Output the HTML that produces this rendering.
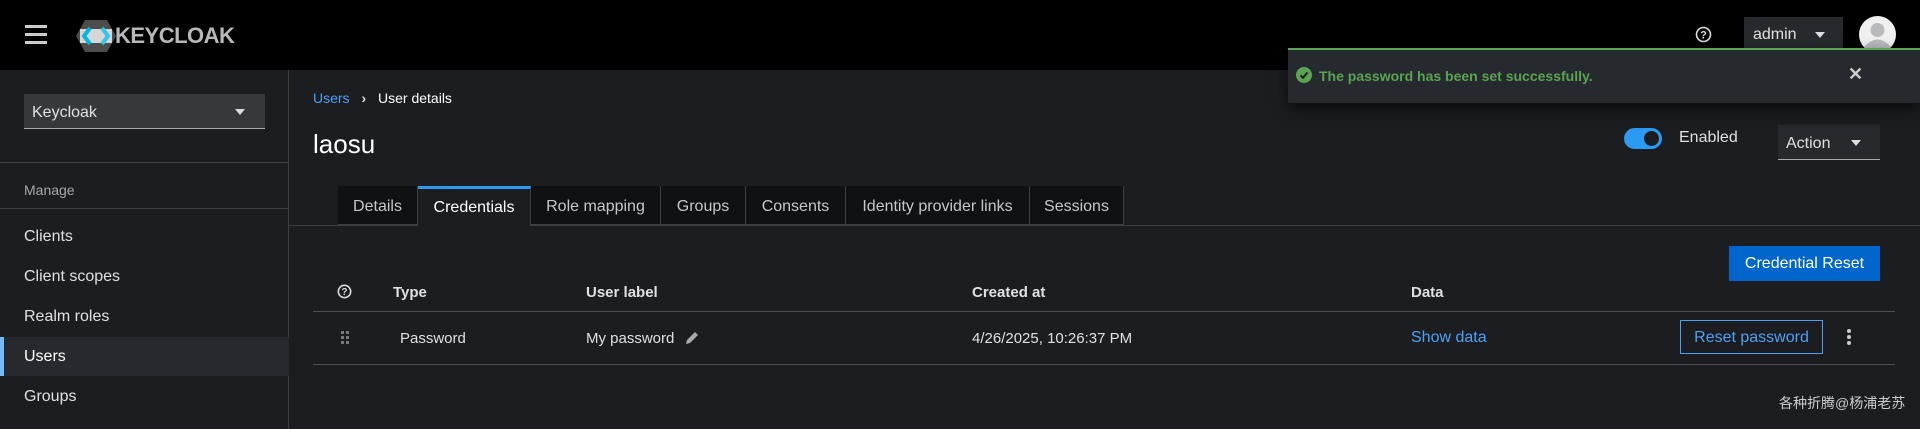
<!DOCTYPE html>
<html><head><meta charset="utf-8"><style>
*{box-sizing:border-box;margin:0;padding:0}
body{width:1920px;height:429px;overflow:hidden;background:#1b1d21;font-family:"Liberation Sans","Noto Sans CJK SC",sans-serif;color:#e0e0e0;font-size:16px;position:relative}
.a{position:absolute;white-space:nowrap}
.hdr{left:0;top:0;width:1920px;height:70px;background:#000}
.side{left:0;top:70px;width:289px;height:359px;background:#1b1d21;border-right:1px solid #3c3f42}
.line{position:absolute;height:1px;background:#3c3f42}
.tab{position:absolute;top:186px;height:39px;background:#0f1113;color:#c7c7c7;font-size:16px;line-height:41px;text-align:center;border-right:1px solid #3c3f42;border-bottom:1px solid #3c3f42}
.th{font-weight:bold;font-size:15px;color:#e0e0e0}
.blue{color:#4da1f5}
</style></head><body>
<div class="a hdr"></div>
<div class="a" style="left:25px;top:25px;width:22px;height:3px;background:#ccc;box-shadow:0 8px 0 #ccc,0 16px 0 #ccc"></div>
<svg class="a" style="left:76px;top:20px" width="40" height="32" viewBox="0 0 40 32"><polygon points="9,0 31,0 40,16 31,32 9,32 0,16" fill="#4d4d4d"/><polygon points="4,9 36,9 36,23 4,23" fill="#e6e6e6" opacity=".9"/><path d="M14 8 L8 16 L14 24" stroke="#00b8e3" stroke-width="4" fill="none"/><path d="M26 8 L32 16 L26 24" stroke="#33c6e9" stroke-width="4" fill="none"/></svg>
<div class="a" style="left:115px;top:23px;font-size:22px;font-weight:bold;color:#b8b8b8;letter-spacing:-0.5px">KEYCLOAK</div>
<svg class="a" style="left:1695px;top:26px" width="17" height="17" viewBox="0 0 17 17"><circle cx="8.5" cy="8.5" r="7" stroke="#ddd" stroke-width="1.6" fill="none"/><text x="8.5" y="12.5" font-size="11" font-weight="bold" text-anchor="middle" fill="#ddd" font-family="Liberation Sans">?</text></svg>
<div class="a" style="left:1744px;top:17px;width:99px;height:34px;background:#26292d;border-bottom:1px solid #aaa;color:#e0e0e0;line-height:36px;padding-left:9px">admin</div>
<div class="a" style="left:1815px;top:32px;border:5px solid transparent;border-top:6px solid #ddd"></div>
<svg class="a" style="left:1859px;top:16px" width="37" height="37" viewBox="0 0 37 37"><circle cx="18.5" cy="18.5" r="18.5" fill="#f0f0f0"/><circle cx="18.5" cy="14" r="7" fill="#b8bbbe"/><path d="M5 31 Q18.5 16 32 31 Q18.5 42 5 31Z" fill="#b8bbbe"/></svg>

<div class="a side"></div>
<div class="a" style="left:24px;top:94px;width:241px;height:35px;background:#36383c;border-bottom:1px solid #aaa;line-height:37px;padding-left:8px;color:#e0e0e0">Keycloak</div>
<div class="a" style="left:235px;top:109px;border:5px solid transparent;border-top:6px solid #ddd"></div>
<div class="line" style="left:0;top:162px;width:289px"></div>
<div class="line" style="left:0;top:208px;width:289px"></div>
<div class="a" style="left:24px;top:182px;font-size:14px;color:#a8a8a8">Manage</div>
<div class="a" style="left:24px;top:228px">Clients</div>
<div class="a" style="left:24px;top:268px">Client scopes</div>
<div class="a" style="left:24px;top:308px">Realm roles</div>
<div class="a" style="left:0;top:337px;width:289px;height:39px;background:#26292d;border-left:4px solid #73bcf7"></div>
<div class="a" style="left:24px;top:348px;color:#fff">Users</div>
<div class="a" style="left:24px;top:388px">Groups</div>

<div class="a" style="left:313px;top:90px;font-size:14px"><span class="blue">Users</span> <span style="margin:0 8px;font-weight:bold">›</span> <span style="color:#fff">User details</span></div>
<div class="a" style="left:313px;top:129px;font-size:26px;color:#fff">laosu</div>
<div class="a" style="left:1624px;top:128px;width:38px;height:21px;border-radius:11px;background:#2b9af3"></div>
<div class="a" style="left:1644px;top:131px;width:15px;height:15px;border-radius:50%;background:#1b1d21"></div>
<div class="a" style="left:1679px;top:129px">Enabled</div>
<div class="a" style="left:1778px;top:125px;width:102px;height:35px;background:#26292d;border-bottom:1px solid #aaa;line-height:37px;padding-left:8px">Action</div>
<div class="a" style="left:1851px;top:140px;border:5px solid transparent;border-top:6px solid #ddd"></div>

<div class="line" style="left:289px;top:225px;width:1631px"></div>
<div class="tab" style="left:338px;width:80px">Details</div>
<div class="tab" style="left:418px;width:113px;background:#1b1d21;color:#fff;border-top:3px solid #2b9af3;border-bottom:none;line-height:38px;height:40px">Credentials</div>
<div class="tab" style="left:531px;width:130px">Role mapping</div>
<div class="tab" style="left:661px;width:85px">Groups</div>
<div class="tab" style="left:746px;width:100px">Consents</div>
<div class="tab" style="left:846px;width:184px">Identity provider links</div>
<div class="tab" style="left:1030px;width:94px">Sessions</div>

<div class="a" style="left:1729px;top:246px;width:151px;height:35px;background:#0066cc;color:#fff;line-height:36px;text-align:center">Credential Reset</div>
<svg class="a" style="left:337px;top:284px" width="15" height="15" viewBox="0 0 17 17"><circle cx="8.5" cy="8.5" r="7" stroke="#ddd" stroke-width="1.8" fill="none"/><text x="8.5" y="12.5" font-size="11" font-weight="bold" text-anchor="middle" fill="#ddd" font-family="Liberation Sans">?</text></svg>
<div class="a th" style="left:393px;top:284px">Type</div>
<div class="a th" style="left:586px;top:284px">User label</div>
<div class="a th" style="left:972px;top:284px">Created at</div>
<div class="a th" style="left:1411px;top:284px">Data</div>
<div class="line" style="left:313px;top:311px;width:1582px;background:#4a4d51"></div>
<div class="a" style="left:341px;top:331px;width:3px;height:3px;background:#777;box-shadow:5px 0 #777,0 5px #777,5px 5px #777,0 10px #777,5px 10px #777"></div>
<div class="a" style="left:400px;top:330px;font-size:15px">Password</div>
<div class="a" style="left:586px;top:330px;font-size:15px">My password</div>
<svg class="a" style="left:684px;top:330px" width="16" height="16" viewBox="0 0 16 16"><path d="M2 14 L3 10 L11 2 L14 5 L6 13 Z" fill="#aaa"/></svg>
<div class="a" style="left:972px;top:330px;font-size:15px">4/26/2025, 10:26:37 PM</div>
<div class="a blue" style="left:1411px;top:329px">Show data</div>
<div class="a" style="left:1680px;top:320px;width:143px;height:34px;border:1px solid #4da1f5;color:#4da1f5;line-height:34px;text-align:center">Reset password</div>
<div class="a" style="left:1847px;top:329px;width:4px;height:4px;border-radius:50%;background:#ccc;box-shadow:0 6px #ccc,0 12px #ccc"></div>
<div class="line" style="left:313px;top:364px;width:1582px;background:#4a4d51"></div>
<div class="a" style="left:1779px;top:393px;font-size:14px;color:#ccc">各种折腾@杨浦老苏</div>

<div class="a" style="left:1288px;top:48px;width:632px;height:55px;background:#26292d;border-top:2px solid #5ba352;box-shadow:0 6px 14px rgba(0,0,0,.6)"></div>
<svg class="a" style="left:1296px;top:67px" width="16" height="16" viewBox="0 0 16 16"><circle cx="8" cy="8" r="8" fill="#5ba352"/><path d="M4.5 8.3 L7 10.8 L11.5 5.5" stroke="#1b1d21" stroke-width="2" fill="none"/></svg>
<div class="a" style="left:1319px;top:68px;font-size:14px;font-weight:bold;color:#5ba352">The password has been set successfully.</div>
<div class="a" style="left:1848px;top:64px;font-size:18px;font-weight:bold;color:#ccc">✕</div>
</body></html>
